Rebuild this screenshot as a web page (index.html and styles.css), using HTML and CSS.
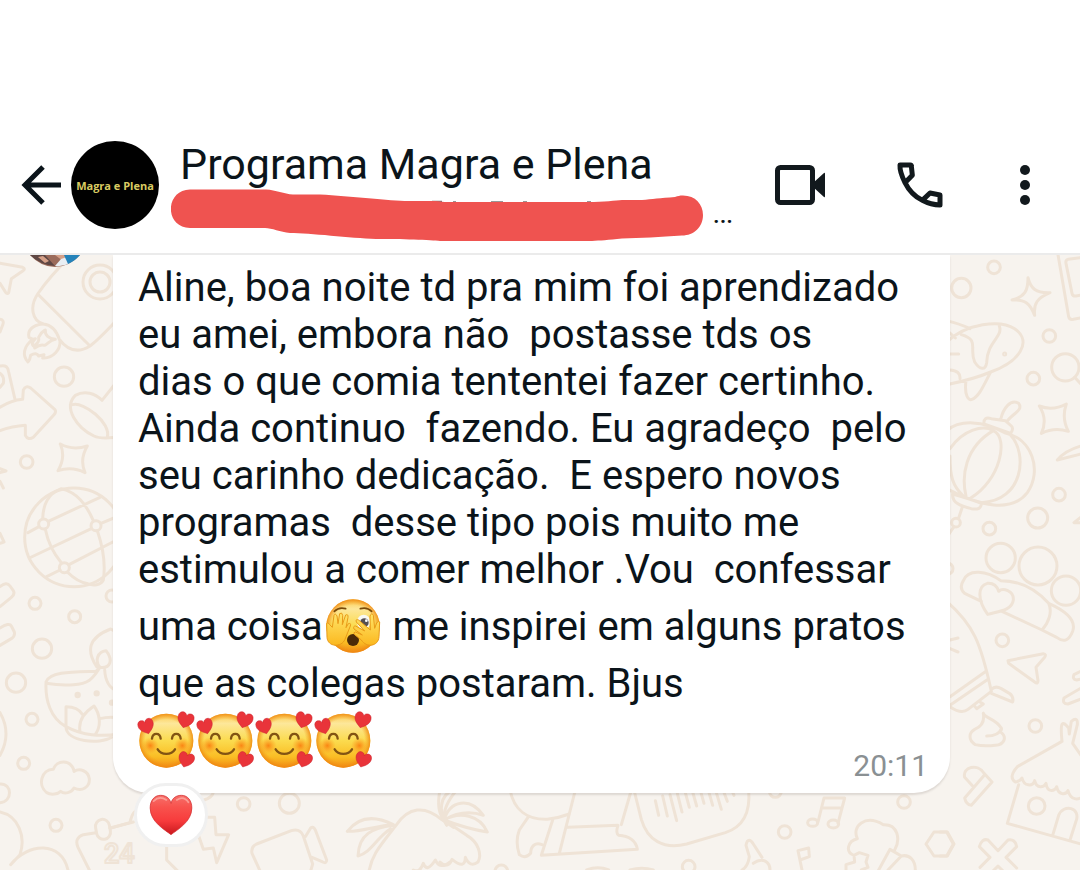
FILE: index.html
```html
<!DOCTYPE html>
<html lang="pt-BR">
<head>
    <meta charset="UTF-8">
    <meta name="viewport" content="width=device-width, initial-scale=1.0">
    <title>Programa Magra e Plena</title>
    <link rel="stylesheet" href="styles.css">
</head>
<body>

<!-- Shared drawings -->
<svg class="defs" width="0" height="0" aria-hidden="true">
    <defs>
        <linearGradient id="face" x1="0" y1="0" x2="0" y2="1">
            <stop offset="0" stop-color="#fbc94a"/>
            <stop offset=".18" stop-color="#fde79a"/>
            <stop offset=".5" stop-color="#fbdb4e"/>
            <stop offset=".8" stop-color="#fabd24"/>
            <stop offset="1" stop-color="#f28d15"/>
        </linearGradient>
        <radialGradient id="rim">
            <stop offset=".78" stop-color="#f59a1c" stop-opacity="0"/>
            <stop offset="1" stop-color="#ee850f" stop-opacity=".85"/>
        </radialGradient>
        <radialGradient id="blush">
            <stop offset="0" stop-color="#fa7d0e" stop-opacity=".9"/>
            <stop offset="1" stop-color="#fb9a20" stop-opacity="0"/>
        </radialGradient>
        <linearGradient id="hand" x1="0" y1="0" x2="0" y2="1">
            <stop offset="0" stop-color="#ffe56a"/>
            <stop offset="1" stop-color="#fbb81f"/>
        </linearGradient>
        <linearGradient id="red" x1="0" y1="0" x2="0" y2="1">
            <stop offset="0" stop-color="#f6706a"/>
            <stop offset=".3" stop-color="#f8524d"/>
            <stop offset=".65" stop-color="#f73b3c"/>
            <stop offset="1" stop-color="#c9181e"/>
        </linearGradient>
        <path id="heart" d="M0 17C-5 13-18 6-18-6C-18-13-14-17-9-17C-5-17-1-15 0-10C1-15 5-17 9-17C14-17 18-13 18-6C18 6 5 13 0 17Z"/>
        <symbol id="love" viewBox="0 0 168 168" overflow="visible">
            <circle cx="85" cy="86" r="81" fill="url(#face)"/>
            <circle cx="85" cy="86" r="81" fill="url(#rim)"/>
            <circle cx="37" cy="101" r="25" fill="url(#blush)"/>
            <circle cx="133" cy="101" r="25" fill="url(#blush)"/>
            <g fill="none" stroke="#825413" stroke-width="7" stroke-linecap="round">
                <path d="M42 80C44 61 66 61 68 80"/>
                <path d="M102 80C104 61 126 61 128 80"/>
                <path d="M59 112C70 130 100 130 111 112"/>
            </g>
            <g fill="#e9343a" stroke="#c9202a" stroke-width="1">
                <use href="#heart" transform="translate(25 44) rotate(-18) scale(1.3)"/>
                <use href="#heart" transform="translate(142 25) rotate(16) scale(1.35)"/>
                <use href="#heart" transform="translate(144 144) rotate(18) scale(1.3)"/>
            </g>
        </symbol>
    </defs>
</svg>

<header class="topbar">
    <button class="icon-btn back" type="button" aria-label="Voltar">
        <svg width="42" height="42" viewBox="0 0 42 42" fill="none" stroke="#0b141a" stroke-width="5">
            <path d="M23 3L5 21L23 39M4 21H41"/>
        </svg>
    </button>
    <div class="group-photo">Magra e Plena</div>
    <div class="group">
        <h1>Programa Magra e Plena</h1>
        <div class="members">
            <svg width="532" height="52" viewBox="171 189 532 52" aria-hidden="true">
                <path d="M432 201.500H442M453 202H456M491 202H503M523 202H527M587 202H591" fill="none" stroke="#777" stroke-width="1.500"/>
                <path d="M190 189.500H266C276 190 284 194 293 194.500H320C350 196 390 201 408 201H435C440 201.500 444 202 448 202H588C604 202 616 200.500 622 200H642C652 199 660 198 675 197C678 196 680 195.500 682 195.500C695 195 703 204 703 215C703 227 694 235.500 682 235.500C660 237 640 238 622 238.500C608 240 600 240.500 592 241H440C432 240 400 239 376 239C350 238 310 233 290 233C280 232 272 228 265 228H190C164 227 165 190 190 189.500Z" fill="#ef5350"/>
            </svg>
            <span>...</span>
        </div>
    </div>
    <div class="actions">
        <button class="icon-btn" type="button" aria-label="Chamada de vídeo">
            <svg width="52" height="48" viewBox="0 0 52 48">
                <rect x="3.500" y="6.500" width="35" height="35" rx="3" fill="none" stroke="#12191d" stroke-width="5"/>
                <path d="M39 22L50 12Q51 11 51 13V35Q51 37 50 36L39 26Z" fill="#12191d"/>
            </svg>
        </button>
        <button class="icon-btn" type="button" aria-label="Chamada de voz">
            <svg width="48" height="48" viewBox="0 0 144 144" fill="none" stroke="#12191d" stroke-width="15" stroke-linejoin="round">
                <path d="M12 12H43Q46 12 46 15L49 43L27 65C20 51 11 27 12 12ZM27 65C39 89 58 108 79 118C96 127 114 132 132 132V102L102 96L79 118"/>
            </svg>
        </button>
        <button class="icon-btn" type="button" aria-label="Mais opções">
            <svg width="22" height="48" viewBox="0 0 22 48" fill="#12191d">
                <circle cx="11" cy="9" r="5"/><circle cx="11" cy="24" r="5"/><circle cx="11" cy="39" r="5"/>
            </svg>
        </button>
    </div>
</header>

<main class="chat">
    <!-- Doodle wallpaper -->
    <svg class="wallpaper" viewBox="0 255 1080 615" preserveAspectRatio="xMidYMin slice" aria-hidden="true">
        <g transform="translate(0 250) scale(.33333)">
            <path d="M0 40L68 52Q78 56 68 63L34 86L26 128Q22 134 17 127L0 100M0 208Q14 210 8 225L0 246"/>
            <path d="M230 0C190 38 150 78 113 132C88 170 96 212 130 222C155 225 169 240 178 268C206 305 238 308 270 288C306 260 330 230 370 190M113 132L270 288"/>
            <circle cx="300" cy="96" r="51"/><circle cx="300" cy="96" r="30"/>
            <path d="M127 222C96 226 82 242 87 262L98 268C70 290 66 316 84 336Q90 330 92 316C104 308 112 310 116 318L132 314L128 324C160 326 182 298 180 272M98 268L106 266C96 276 96 284 100 288C112 282 118 272 116 262C122 246 130 244 136 240C134 256 146 266 166 268C150 270 144 282 134 286C122 282 112 288 104 294"/>
            <circle cx="192" cy="380" r="29"/><circle cx="80" cy="636" r="19"/>
            <path d="M0 348C18 344 24 352 26 366L45 448M0 370Q14 380 10 400L0 412M0 472C22 458 44 450 68 448L70 420Q78 404 92 414L164 478Q170 485 162 494L100 562Q84 572 76 556V526C50 528 28 532 0 542"/>
            <path d="M350 396L306 451C286 430 254 420 226 436C188 474 232 534 282 558C302 568 326 564 350 562M218 464C250 454 334 518 322 562"/>
            <path d="M181 582Q218 602 262 588Q238 628 255 668Q216 648 174 662Q198 622 181 582M0 656L18 663L0 668M0 694L10 714M0 850L12 876L0 880"/>
            <circle cx="222" cy="862" r="148"/><circle cx="131" cy="822" r="15"/><circle cx="288" cy="827" r="15"/><circle cx="193" cy="953" r="15"/>
            <path d="M84 848L117 830M145 814L300 742M128 806C130 760 144 732 184 716C232 728 258 762 280 812M136 838C144 878 160 910 184 938M88 924L274 836M303 820L370 792M292 842C312 900 316 950 310 990C302 1006 280 1008 262 1001M207 944L350 870M180 960L140 980M202 966C220 984 240 998 264 1001"/>
        </g>
        <g transform="translate(0 550) scale(.33333)">
            <path d="M0 110Q20 94 30 108L40 122Q46 132 34 142L0 170M0 234Q28 216 34 228L43 246Q46 258 34 266L0 286"/>
            <circle cx="105" cy="160" r="18"/><circle cx="224" cy="200" r="18"/><circle cx="336" cy="138" r="18"/><circle cx="126" cy="296" r="29"/><circle cx="48" cy="398" r="29"/><circle cx="96" cy="508" r="18"/><circle cx="71" cy="640" r="18"/><circle cx="168" cy="826" r="18"/>
            <path d="M0 488Q36 550 0 616M0 702C38 700 38 756 0 758M290 350C260 304 262 264 332 237L360 252M300 352C284 334 292 304 318 302C340 330 332 356 300 352M138 396C150 364 220 366 288 364L300 352C278 388 264 402 220 404C190 406 164 404 138 400C136 448 150 504 198 530C250 558 300 560 360 552M314 360C316 392 328 414 350 422M198 530V470C226 470 240 480 248 494M240 544C232 500 270 476 282 468C300 492 304 526 288 550M300 506Q328 498 360 504M198 530C198 576 300 584 335 562"/>
            <circle cx="233" cy="435" r="5"/><circle cx="290" cy="430" r="5"/><circle cx="336" cy="458" r="5"/>
            <path d="M222 662C212 628 170 628 160 658C124 658 112 706 140 728C154 736 174 732 182 724C194 734 214 728 222 714C246 726 270 712 268 686C264 662 240 654 222 664"/>
            <path d="M0 786C56 798 78 860 60 914L32 944C84 878 184 872 204 960M288 848L250 854Q222 864 234 892L268 960M330 834L400 816"/>
            <rect x="288" y="808" width="42" height="60" rx="21" transform="rotate(-10 309 838)"/>
        </g>
        <g transform="translate(940 250) scale(.33333)">
            <circle cx="162" cy="52" r="19"/><circle cx="64" cy="114" r="29"/><circle cx="328" cy="258" r="19"/><circle cx="280" cy="386" r="19"/><circle cx="376" cy="352" r="41"/><circle cx="357" cy="734" r="19"/><circle cx="293" cy="804" r="30"/><circle cx="148" cy="836" r="19"/>
            <path d="M264 83C272 116 288 130 330 128C292 144 280 160 284 196C270 160 256 148 216 150C254 140 264 124 264 83M354 14L386 200Q388 210 400 208L430 202M430 22L384 28Q376 30 378 40L396 130Q398 140 408 138L430 134M404 382L430 410"/>
            <path d="M20 212Q60 222 90 236M20 276C80 220 180 208 224 236C280 276 236 336 152 366C110 384 60 396 20 404M20 240L46 264M64 254C120 270 86 296 104 336C120 360 136 362 140 338C142 272 190 262 178 228M30 312H56M30 360Q62 362 60 386M78 392C72 436 86 454 96 448C118 440 134 400 152 366"/><circle cx="194" cy="312" r="3"/>
            <path d="M298 468Q338 484 379 462Q364 504 385 544Q344 530 304 550Q324 508 298 468M430 586Q376 600 352 630L430 610M430 796L402 818H430"/>
            <path d="M132 522Q130 498 154 506L196 512L214 528Q222 536 212 550L132 522M182 508C190 474 212 446 236 460C252 482 214 492 200 516M20 542C60 508 130 512 194 548C276 566 308 660 262 728C216 788 120 770 20 716M30 596C70 538 130 524 160 542C74 592 64 680 78 738M160 542C208 564 180 692 92 744M212 556C264 612 250 752 124 758M30 618C30 680 38 708 70 738M38 732C66 740 100 750 124 760Q124 782 94 776C60 768 36 758 38 732M66 774L56 804M42 830L20 862"/><circle cx="48" cy="818" r="13"/>
        </g>
        <g transform="translate(940 550) scale(.33333)">
            <circle cx="182" cy="24" r="44"/><circle cx="294" cy="48" r="57"/><circle cx="378" cy="122" r="44"/><circle cx="187" cy="271" r="19"/><circle cx="286" cy="528" r="19"/><circle cx="290" cy="768" r="25"/><circle cx="22" cy="56" r="17"/>
            <path d="M124 154L74 130Q56 114 70 92C84 54 142 62 182 92C240 92 290 120 326 160C338 186 326 218 306 240L186 184M326 160C380 184 410 210 398 244Q382 286 350 262L306 240M143 193C112 150 112 108 142 100Q168 98 176 124C188 112 222 122 220 150C216 182 174 184 143 193"/>
            <path d="M204 332L310 311Q320 312 314 322L288 352L294 392Q294 404 284 396L206 340ZM20 154C100 224 122 276 154 424M30 270L54 264M30 296L54 306M30 440L138 364M30 466L144 388M30 470Q64 494 84 478L154 424M154 418Q166 406 184 416L208 430Q222 440 218 456L154 430M102 466L110 476L130 462L120 456"/>
            <path d="M130 490C136 506 164 504 184 534C186 540 180 544 180 544C204 562 192 584 166 586Q130 590 106 584C84 570 86 548 104 538Q136 526 130 490M140 558Q176 558 184 536M74 682C66 650 114 640 132 670L156 696L94 766Q78 764 74 744L134 674M74 682L100 710M430 360L402 374Q396 388 410 390L430 386M430 410L372 444Q366 462 384 462L430 444"/>
            <path d="M366 574L232 650Q204 682 226 696C240 694 246 684 246 684C252 710 278 710 284 692C290 718 312 712 318 700C322 730 346 724 350 710C356 740 380 732 384 722C392 752 414 750 430 740M366 574C360 514 366 510 386 534L388 552L394 514Q414 498 412 524L398 580L430 626M236 704L202 820L430 884M338 856L356 796C370 760 424 772 408 814L390 870"/>
            <path d="M0 846H22L42 882L22 918H0M174 902L144 870Q126 864 118 890L150 922L120 952M174 902L204 870Q226 866 230 890L198 922L230 954M154 968L174 948L194 968"/>
        </g>
        <g transform="translate(100 770) scale(.33333)">
            <circle cx="431" cy="102" r="19"/><circle cx="568" cy="100" r="30"/>
            <path d="M312 90Q338 82 340 66M320 142H344L348 194H386L350 278L340 234L310 238L290 180M200 230V270L240 310M30 175L90 158Q100 110 120 130"/>
            <path d="M470 222L574 182Q600 174 610 198L638 282L630 310M488 320L456 250Q452 230 470 222M616 200L632 174Q640 168 646 180L680 270Q680 282 668 276L636 262"/>
            <path d="M742 184C776 140 824 136 880 164C830 166 784 186 742 184M880 166C818 174 776 192 774 258C812 250 832 200 872 176M806 310C814 256 838 230 888 166C926 110 974 106 1024 148L1060 172M1060 60C1020 74 1014 124 1040 166M940 300Q960 310 970 280Q980 310 1006 270Q1020 300 1050 276"/>
        </g>
        <text class="year" x="104" y="863" font-size="27">24</text>
        <g transform="translate(440 740) scale(.33333)">
            <path d="M50 150Q8 200 12 240M12 240C30 180 90 170 130 226Q70 206 12 240M12 240C60 212 120 226 142 276Q80 266 12 240L80 286C116 306 126 344 114 366Q90 384 76 352Q76 390 36 358Q24 388 0 366M12 240C0 226-10 200 0 150"/>
            <path d="M210 150C222 210 262 240 322 238Q356 234 388 222M406 150L358 340M264 232L238 270C228 296 232 326 238 344Q256 358 272 340C272 318 286 306 306 314M338 240L304 346L592 328C588 302 566 288 536 286Q526 280 534 256L384 262M574 150L544 254"/>
            <path d="M582 150L604 238C622 300 670 330 740 312L856 278C906 262 932 220 926 150M646 182L656 226M668 168L682 228M690 164L710 242M712 160L726 216M736 158L748 202M758 156L770 198M782 154L792 190M806 154L818 196M828 154L844 208M850 152L862 184M876 152L882 166"/>
            <ellipse cx="1118" cy="248" rx="15" ry="11"/><ellipse cx="1180" cy="252" rx="16" ry="12"/><circle cx="1034" cy="276" r="19"/><circle cx="1392" cy="186" r="19"/><circle cx="1006" cy="154" r="18"/><circle cx="184" cy="394" r="19"/><circle cx="746" cy="380" r="19"/>
            <path d="M1134 246L1152 174H1214L1194 250M1146 204H1206M1482 276H1520L1540 312L1520 348H1482L1458 312ZM940 370C968 350 990 366 990 390M906 390Q924 380 928 350L918 316C922 294 932 298 940 312L966 352M1086 390L1074 332L1106 324L1108 350L1080 360"/>
            <path d="M1252 296C1234 258 1276 222 1330 254C1374 252 1382 298 1364 330M1252 296C1224 302 1214 336 1242 346L1258 338L1284 346L1278 366L1284 382L1264 390M1242 346L1244 366L1218 374V390M1316 390L1350 328L1384 348L1344 390M1384 348C1410 342 1426 362 1426 390M440 390Q474 376 506 390M570 390Q606 380 640 390"/>
        </g>
    </svg>

    <article class="message">
        <svg class="sender" width="68" height="12" viewBox="0 0 68 12" role="img" aria-label="Foto do contato">
            <path d="M9 0H59Q48 12 34 12Q20 12 9 0Z" fill="#9b6b5b"/>
            <path d="M9 0H24L34 11Q19 10 9 0Z" fill="#5e4744"/>
            <path d="M17 2L24 8L28 6L22 1ZM34 0L42 6L47 0Z" fill="#d6a088"/>
            <path d="M34 11L40 4L46 2L49 8Q42 12 34 11Z" fill="#e9eef3"/>
            <path d="M43 0H59Q54 6 47 9Z" fill="#2583ba"/>
        </svg>
        <div class="bubble">
            <p>Aline, boa noite td pra mim foi aprendizado
eu amei, embora não  postasse tds os
dias o que comia tententei fazer certinho.
Ainda continuo  fazendo. Eu agradeço  pelo
seu carinho dedicação.  E espero novos
programas  desse tipo pois muito me
estimulou a comer melhor .Vou  confessar</p>
            <p class="with-emoji">uma coisa<svg class="emoji" viewBox="0 0 168 168" role="img" aria-label="rosto espiando"><circle cx="84" cy="84" r="80" fill="url(#face)"/><circle cx="84" cy="84" r="80" fill="url(#rim)"/><g fill="none" stroke="#7a4a08" stroke-width="5" stroke-linecap="round"><path d="M28 40Q42 26 62 32M106 32Q126 26 140 40"/></g><ellipse cx="116" cy="72" rx="20" ry="22" fill="#f8f8f4"/><circle cx="118" cy="74" r="13" fill="#555052"/><circle cx="124" cy="68" r="4" fill="#fff"/><ellipse cx="84" cy="126" rx="18" ry="18" fill="#4b2b08"/><g fill="url(#hand)" stroke="#e99b18" stroke-width="3" stroke-linejoin="round"><path d="M5 76Q9 71 13 79L22 88L27 52Q31 44 36 54L39 77L44 47Q51 41 53 52L52 80L62 51Q70 47 69 58L63 89L70 77Q79 74 76 84L60 124C50 149 8 148 6 118Z"/><path d="M164 72Q160 67 155 75L149 91L145 52Q140 42 135 54L136 96L101 66Q91 62 94 72L119 99L92 84Q83 84 87 93L112 111L91 102Q83 103 89 110L109 126C124 150 160 146 162 116Z"/></g></svg> me inspirei em alguns pratos</p>
            <p>que as colegas postaram. Bjus</p>
            <div class="last-line">
                <div class="emoji-row" role="img" aria-label="quatro rostos sorrindo com corações">
                    <svg class="emoji"><use href="#love"/></svg>
                    <svg class="emoji"><use href="#love"/></svg>
                    <svg class="emoji"><use href="#love"/></svg>
                    <svg class="emoji"><use href="#love"/></svg>
                </div>
                <time datetime="20:11">20:11</time>
            </div>
            <button class="reaction" type="button" aria-label="Reação: coração">
                <svg width="44" height="42" viewBox="-19 -18 38 36">
                    <use href="#heart" fill="url(#red)" stroke="#cf2528" stroke-width=".6"/>
                    <path d="M-15-12Q-10-17-4-13M5-13Q11-17 15-11" fill="none" stroke="#ffc0b8" stroke-width="1.500" stroke-linecap="round" opacity=".6"/>
                </svg>
            </button>
        </div>
    </article>
</main>

</body>
</html>
```
FILE: styles.css
```css
* {
    box-sizing: border-box;
}
body {
    display: flex;
    flex-direction: column;
    min-height: 100vh;
    margin: 0;
    background-color: #fff;
    color: #0b141a;
    font-family: Roboto, sans-serif;
}
.defs {
    position: absolute;
}
.topbar {
    display: flex;
    align-items: center;
    padding: 129px 44px 12px 20px;
    border-bottom: 2px solid #ebebeb;
    background-color: #fff;
}
.icon-btn {
    padding: 0;
    border: none;
    background: none;
    cursor: pointer;
}
.icon-btn svg {
    display: block;
}
.group-photo {
    display: flex;
    flex: none;
    align-items: center;
    justify-content: center;
    width: 88px;
    height: 88px;
    margin-left: 9px;
    border-radius: 50%;
    background-color: #000;
    color: #d9cb62;
    font: bold 11px "Open Sans", sans-serif;
    white-space: nowrap;
}
.group {
    flex: 1;
    padding: 10px 0 0 12px;
}
.group h1 {
    margin: 0 0 0 9px;
    font-size: 43px;
    font-weight: 400;
    line-height: 50px;
    white-space: nowrap;
}
.members {
    display: flex;
    align-items: center;
    gap: 10px;
    height: 52px;
    font-size: 24px;
    font-weight: 500;
}
.actions {
    display: flex;
    align-items: center;
    gap: 70px;
}
.chat {
    position: relative;
    flex: 1;
    overflow: hidden;
    background-color: #f7f3ee;
}
.wallpaper {
    position: absolute;
    inset: 0;
    width: 100%;
    height: 100%;
    fill: none;
    stroke: #efe3d6;
    stroke-width: 9px;
    stroke-linecap: round;
    stroke-linejoin: round;
}
.year {
    font-weight: 500;
    stroke-width: 2px;
}
.message {
    position: relative;
    display: flex;
    align-items: flex-start;
    gap: 24px;
    padding: 0 130px 76px 21px;
}
.sender {
    flex: none;
}
.bubble {
    position: relative;
    flex: 1;
    padding: 9px 22px 10px 25px;
    border-radius: 0 0 36px 36px;
    background-color: #fff;
    box-shadow: 0 2px 2px rgba(80, 70, 60, 0.15);
    font-size: 40px;
    line-height: 47px;
}
.bubble p {
    margin: 0;
    white-space: pre-wrap;
}
.bubble .with-emoji {
    line-height: 67px;
}
.emoji {
    width: 56px;
    height: 56px;
    overflow: visible;
}
.with-emoji .emoji {
    margin: 0 2px;
    vertical-align: -14px;
}
.last-line {
    display: flex;
    align-items: flex-end;
    justify-content: space-between;
    padding-top: 5px;
}
.emoji-row {
    display: flex;
    gap: 3px;
    padding-bottom: 15px;
}
.last-line time {
    color: #8a9093;
    font-size: 30px;
    line-height: 34px;
}
.reaction {
    position: absolute;
    bottom: -54px;
    left: 21px;
    display: flex;
    align-items: center;
    justify-content: center;
    width: 74px;
    height: 64px;
    padding: 0;
    border: 3px solid #f0f0f0;
    border-radius: 32px;
    background-color: #fff;
    cursor: pointer;
}
```
